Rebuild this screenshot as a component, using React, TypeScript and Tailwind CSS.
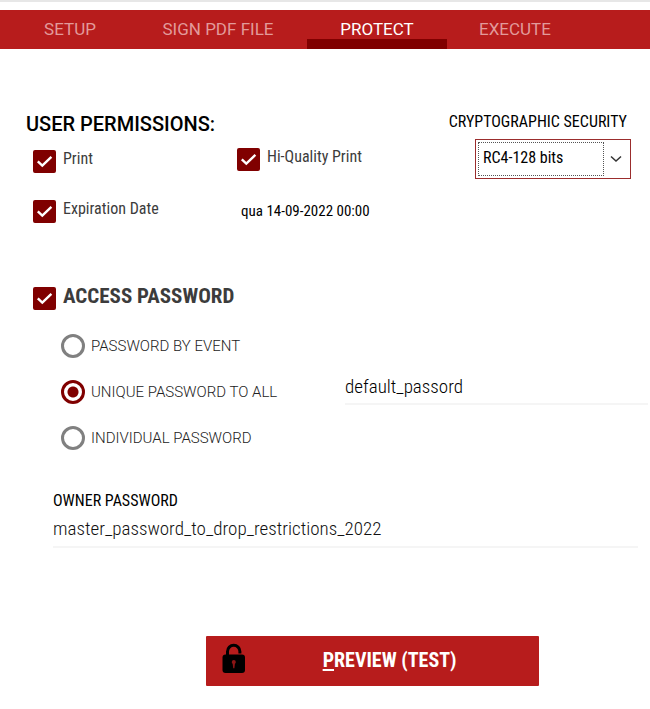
import React, { useState } from 'react';

const tabs = [
  { id: 'setup', label: 'SETUP', width: 'w-[118px]' },
  { id: 'sign', label: 'SIGN PDF FILE', width: 'w-[178px]' },
  { id: 'protect', label: 'PROTECT', width: 'w-[140px]' },
  { id: 'execute', label: 'EXECUTE', width: 'w-[136px]' },
];

const passwordModes = [
  { id: 'event', label: 'PASSWORD BY EVENT' },
  { id: 'unique', label: 'UNIQUE PASSWORD TO ALL' },
  { id: 'individual', label: 'INDIVIDUAL PASSWORD' },
];

interface CheckProps {
  label: string;
  textClass?: string;
}

function Check({ label, textClass = 'text-base leading-5 text-[#3c3c3c] pb-1' }: CheckProps) {
  return (
    <label className="flex items-center gap-[7px]">
      <span className="grid size-[23px] shrink-0">
        <input
          type="checkbox"
          defaultChecked
          className="peer col-start-1 row-start-1 size-[23px] appearance-none rounded-[2px] border-2 border-[#757575] checked:border-[#800000] checked:bg-[#800000]"
        />
        <svg
          viewBox="0 0 23 23"
          className="pointer-events-none invisible col-start-1 row-start-1 size-[23px] peer-checked:visible"
          fill="none"
          stroke="white"
          strokeWidth="2.4"
        >
          <path d="M4.8 11.3 9.3 15.6 18.4 6.8" />
        </svg>
      </span>
      <span className={textClass}>{label}</span>
    </label>
  );
}

export default function App() {
  const [activeTab, setActiveTab] = useState('protect');
  const [mode, setMode] = useState('unique');

  return (
    <div className="bg-white pb-5 font-['Roboto_Condensed','Liberation_Sans_Narrow',Roboto,sans-serif] text-black">
      {/* Tabs */}
      <header className="border-t-2 border-[#e7e7e7] pt-2">
        <nav className="flex h-[39px] bg-[#b71c1c] pl-[11px] font-['Roboto',sans-serif] text-[17px]">
          {tabs.map((tab) => (
            <button
              key={tab.id}
              type="button"
              onClick={() => setActiveTab(tab.id)}
              className={`${tab.width} border-b-[10px] pt-2 leading-5 ${
                activeTab === tab.id
                  ? 'border-[#800000] text-white'
                  : 'border-transparent text-[#e29a9a]'
              }`}
            >
              {tab.label}
            </button>
          ))}
        </nav>
      </header>

      <main>
        {/* Permissions */}
        <section className="flex justify-between pt-[61px] pr-[19px] pl-[26px]">
          <div>
            <h2 className="font-['Roboto',sans-serif] text-xl leading-7 font-medium">
              USER PERMISSIONS:
            </h2>
            <div className="mt-[9px] grid grid-cols-[204px_auto] items-start gap-y-[26px] pl-[7px]">
              <div className="pt-[2px]">
                <Check label="Print" />
              </div>
              <Check label="Hi-Quality Print" />
              <Check label="Expiration Date" />
              <input
                type="text"
                aria-label="Expiration date"
                defaultValue="qua 14-09-2022 00:00"
                className="h-6 w-40 pl-1 text-[15px] outline-none"
              />
            </div>
          </div>
          <div className="flex flex-col items-end">
            <label htmlFor="security" className="pt-[2px] pr-1 text-base leading-5">
              CRYPTOGRAPHIC SECURITY
            </label>
            <div className="mt-[7px] grid h-10 w-[156px] grid-cols-[1fr_24px] items-center border border-[#9b2d2d] p-[2px]">
              <select
                id="security"
                className="h-[34px] appearance-none border border-dotted border-[#555] px-1 pb-[2px] text-base outline-none"
              >
                <option>RC4-128 bits</option>
                <option>AES-128 bits</option>
                <option>AES-256 bits</option>
              </select>
              <svg
                viewBox="0 0 12 8"
                className="pointer-events-none h-2 w-3 justify-self-center"
                fill="none"
                stroke="#333"
                strokeWidth="1.5"
              >
                <path d="M1 1.5 6 6 11 1.5" />
              </svg>
            </div>
          </div>
        </section>

        {/* Access password */}
        <section className="pt-[61px] pl-[33px]">
          <Check
            label="ACCESS PASSWORD"
            textClass="pb-1 text-[21px] leading-6 font-bold text-[#3c3c3c]"
          />
          <div className="flex items-center pt-[22px] pl-7">
            <div className="flex w-[284px] shrink-0 flex-col gap-[22px]">
              {passwordModes.map((item) => (
                <label
                  key={item.id}
                  className="flex h-6 items-center gap-[6px] font-['Roboto',sans-serif] text-[15px] font-light text-[#222]"
                >
                  <input
                    type="radio"
                    name="mode"
                    checked={mode === item.id}
                    onChange={() => setMode(item.id)}
                    className="size-6 shrink-0 appearance-none rounded-full border-[3px] border-[#808080] checked:border-[#800000] checked:bg-[radial-gradient(circle,#800000_5px,transparent_6px)]"
                  />
                  {item.label}
                </label>
              ))}
            </div>
            <input
              type="text"
              aria-label="Password"
              defaultValue="default_passord"
              className="mr-[2px] mb-[10px] h-9 min-w-0 flex-1 border-b-2 border-[#f5f5f5] text-[19px] font-light outline-none"
            />
          </div>
        </section>

        {/* Owner password */}
        <section className="flex flex-col pt-[41px] pr-3 pl-[53px]">
          <label htmlFor="owner" className="text-base leading-5">
            OWNER PASSWORD
          </label>
          <input
            id="owner"
            type="text"
            defaultValue="master_password_to_drop_restrictions_2022"
            className="h-[37px] border-b-2 border-[#f5f5f5] text-[19px] font-light text-[#111] outline-none"
          />
        </section>

        <div className="flex justify-center pt-[88px] pr-1 pl-[98px]">
          <button
            type="button"
            className="flex h-[50px] w-[333px] items-center rounded-[1px] bg-[#b71c1c] pr-[82px] pl-4 text-xl font-bold text-white"
          >
            <svg viewBox="0 0 24 30" className="mb-[6px] h-[30px] w-6">
              <path
                d="M5.5 12.5V8.5a6.2 6.2 0 0 1 12.4 0V10.4"
                fill="none"
                stroke="black"
                strokeWidth="3"
              />
              <rect x="0.5" y="11.5" width="22.5" height="18.5" rx="3" fill="black" />
              <path d="M9.8 19a2 2 0 1 1 4 0c0 1-.6 1.5-.9 2l-.5 4.2h-1.2l-.5-4.2c-.3-.5-.9-1-.9-2z" fill="#8c1515" />
            </svg>
            <span className="flex-1 pb-[2px] text-right">
              <span className="underline underline-offset-2">P</span>REVIEW (TEST)
            </span>
          </button>
        </div>
      </main>
    </div>
  );
}
